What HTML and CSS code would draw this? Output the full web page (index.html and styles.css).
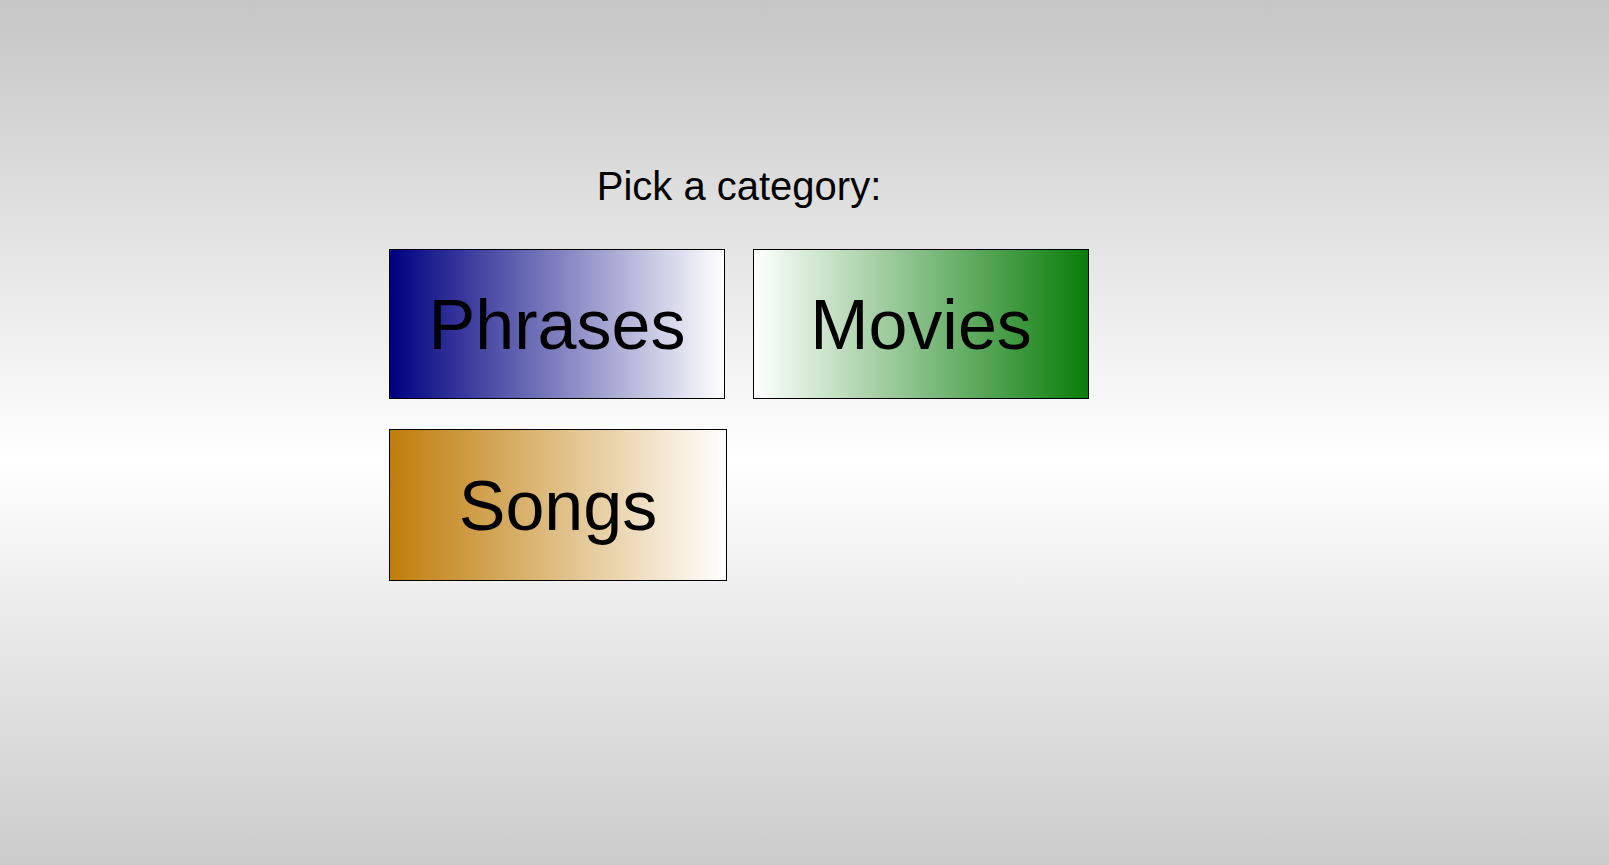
FILE: index.html
```html
<!DOCTYPE html>
<html lang="en">
<head>
<meta charset="utf-8">
<title>Pick a category</title>
<link rel="stylesheet" href="styles.css">
</head>
<body>
<main class="picker">
  <h1 class="prompt">Pick a category:</h1>
  <div class="choices">
    <div class="row">
      <div class="choice phrases">Phrases</div>
      <div class="choice movies">Movies</div>
    </div>
    <div class="row">
      <div class="choice songs">Songs</div>
    </div>
  </div>
</main>
</body>
</html>
```
FILE: styles.css
```css
html {
  height: 100%;
}
body {
  margin: 0;
  min-height: 100%;
  background: linear-gradient(to bottom, #c6c6c6 0%, #ffffff 53%, #cbcbcb 100%);
  font-family: "Liberation Sans", Arial, sans-serif;
  color: #000;
}
.picker {
  width: 700px;
  padding: 164px 0 0 389px;
}
.prompt {
  margin: 0 0 40px 0;
  font-size: 40px;
  line-height: 45px;
  font-weight: normal;
  text-align: center;
}
.choices {
  display: flex;
  flex-direction: column;
  gap: 30px;
}
.row {
  display: flex;
  gap: 28px;
}
.choice {
  box-sizing: border-box;
  width: 336px;
  height: 150px;
  border: 1px solid #000;
  display: flex;
  align-items: center;
  justify-content: center;
  font-size: 70px;
  line-height: 1;
  padding-top: 1px;
}
.phrases {
  background: linear-gradient(to right, #000080, #ffffff);
}
.movies {
  background: linear-gradient(to right, #ffffff, #0b7d0b);
}
.songs {
  width: 338px;
  height: 152px;
  background: linear-gradient(to right, #bf7d0b, #ffffff);
}
```
